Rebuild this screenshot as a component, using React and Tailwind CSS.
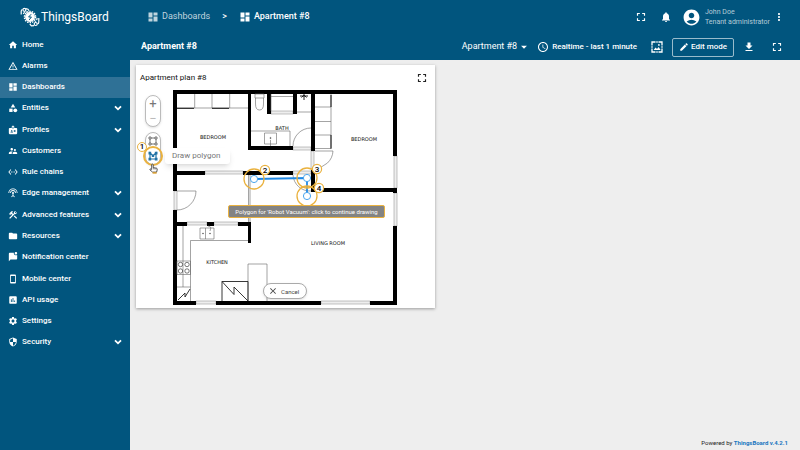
import React from 'react';
import {
  MdAccountCircle, MdArrowDropDown, MdBadge, MdCategory, MdConstruction, MdDashboard, MdEdit, MdFileDownload,
  MdFolder, MdFullscreen, MdHome, MdInsertChart, MdMarkChatUnread, MdMoreVert, MdNotifications, MdAccessTime,
  MdSecurity, MdSettings, MdSettingsEthernet, MdSettingsInputAntenna, MdSmartphone, MdSupervisorAccount,
  MdWarningAmber, MdClose,
} from 'react-icons/md';

const menu = [
  { label: 'Home', icon: MdHome },
  { label: 'Alarms', icon: MdWarningAmber },
  { label: 'Dashboards', icon: MdDashboard, active: true },
  { label: 'Entities', icon: MdCategory, expandable: true },
  { label: 'Profiles', icon: MdBadge, expandable: true },
  { label: 'Customers', icon: MdSupervisorAccount },
  { label: 'Rule chains', icon: MdSettingsEthernet },
  { label: 'Edge management', icon: MdSettingsInputAntenna, expandable: true },
  { label: 'Advanced features', icon: MdConstruction, expandable: true },
  { label: 'Resources', icon: MdFolder, expandable: true },
  { label: 'Notification center', icon: MdMarkChatUnread },
  { label: 'Mobile center', icon: MdSmartphone },
  { label: 'API usage', icon: MdInsertChart },
  { label: 'Settings', icon: MdSettings },
  { label: 'Security', icon: MdSecurity, expandable: true },
];

const Chevron = () => (
  <svg viewBox="0 0 8 8" className="w-2 h-2" fill="none" stroke="currentColor" strokeWidth="1.8">
    <path d="M1 2.3 4 5.3 7 2.3" />
  </svg>
);

const Logo = () => (
  <svg viewBox="0 0 20 20" className="w-5 h-5" fill="none" stroke="currentColor" strokeWidth="1.2">
    <circle cx="10" cy="10" r="5.6" strokeWidth="1.4" strokeDasharray="1.5 1" />
    <circle cx="10" cy="10" r="4.3" fill="currentColor" />
    <path d="M11.2 7.2 8.6 10h2.8l-2.2 2.9" stroke="#01557e" strokeWidth="1" />
    <path d="M1.2 7.5V4.2Q1.2 2.7 2.4 2.5M4.6 5.2 3.2 7M5.8 1.7 8 2.2l1 1.6M6 4.6l1 1" />
    <circle cx="4.4" cy="2.8" r="1.5" />
    <path d="M18.8 11v4.2q0 1.4-1.3 1.8M15 14.4l1 .8M14 18.6l-2.6.2-1.6-1.8M17.2 11.2l-.6 2" />
    <circle cx="15.7" cy="17" r="1.5" />
  </svg>
);

const Sidebar = () => (
  <aside className="w-[130px] shrink-0 bg-[#01557e] text-white">
    <a href="#home" className="flex items-center h-[34px] pl-5 gap-[1px]">
      <Logo />
      <span className="text-[12px] leading-4">ThingsBoard</span>
    </a>
    <nav className="grid auto-rows-fr h-[319px]">
      {menu.map(({ label, icon: Icon, active, expandable }) => (
        <a
          key={label}
          href="#menu"
          className={`flex items-center pl-2 pr-2 text-[8px] leading-none font-medium ${active ? 'bg-[#2f7196]' : ''}`}
        >
          <Icon className="w-[10px] h-[10px] mr-1" />
          <span className="flex-1 whitespace-nowrap">{label}</span>
          {expandable && <Chevron />}
        </a>
      ))}
    </nav>
  </aside>
);

const TopBar = () => (
  <header className="flex items-center h-[34px] pl-[17px] pr-[15px] bg-[#01557e] text-white">
    <a href="#dashboards" className="flex items-center gap-[3px] text-[9px] text-white/75">
      <MdDashboard className="w-3 h-3" />
      Dashboards
    </a>
    <span className="mx-3 text-[9px] font-medium">&gt;</span>
    <a href="#apartment" className="flex items-center gap-[3px] text-[9px] font-medium">
      <MdDashboard className="w-3 h-3" />
      Apartment #8
    </a>
    <div className="flex items-center ml-auto">
      <button aria-label="Fullscreen"><MdFullscreen className="w-[14px] h-[14px]" /></button>
      <button aria-label="Notifications" className="ml-3"><MdNotifications className="w-3 h-3" /></button>
      <button aria-label="Account" className="ml-[10px]"><MdAccountCircle className="w-[19px] h-[19px]" /></button>
      <div className="w-[62px] ml-1 text-[7px] leading-[10px] text-white/70 whitespace-nowrap">
        <p>John Doe</p>
        <p>Tenant administrator</p>
      </div>
      <button aria-label="More" className="ml-[6px]"><MdMoreVert className="w-3 h-3" /></button>
    </div>
  </header>
);

const ImageFrame = () => (
  <svg viewBox="0 0 12 12" className="w-3 h-3" fill="none" stroke="currentColor" strokeWidth="1.3">
    <path d="M4.5 1H1v3.5M7.5 1H11v3.5M4.5 11H1V7.5M7.5 11H11V7.5M1 5.3v1.4M11 5.3v1.4M5.3 1h1.4M5.3 11h1.4" />
    <path d="M2.6 9 4.6 6.6 6 8l1.6-2L9.6 9Z" fill="currentColor" stroke="none" />
    <circle cx="7.9" cy="3.9" r=".9" fill="currentColor" stroke="none" />
  </svg>
);

const DashboardToolbar = () => (
  <div className="flex items-center h-[26px] pl-[11px] pr-4 bg-[#01557e] text-white">
    <h1 className="text-[9px] font-bold">Apartment #8</h1>
    <div className="flex items-center ml-auto text-[9px]">
      <button className="flex items-center">
        Apartment #8
        <MdArrowDropDown className="w-[14px] h-[14px]" />
      </button>
      <button className="flex items-center gap-[3px] ml-[6px] text-[8px] font-medium">
        <MdAccessTime className="w-3 h-3" />
        Realtime - last 1 minute
      </button>
      <button aria-label="Image" className="ml-[14px]"><ImageFrame /></button>
      <button className="flex items-center justify-center gap-[2px] w-[62px] h-[19px] ml-[9px] border border-white/60 rounded-[2px] text-[8px] font-medium">
        <MdEdit className="w-[10px] h-[10px]" />
        Edit mode
      </button>
      <button aria-label="Download" className="ml-[9px]"><MdFileDownload className="w-3 h-3" /></button>
      <button aria-label="Expand" className="ml-[15px]"><MdFullscreen className="w-[14px] h-[14px]" /></button>
    </div>
  </div>
);

// x, y, width, height
const walls = [
  [0, 0, 224, 4], [0, 0, 4, 101], [0, 120, 4, 95], [0, 211, 23, 4], [43, 211, 105, 4], [197, 211, 27, 4],
  [220, 0, 4, 66], [220, 98, 4, 5], [220, 136, 4, 79], [75, 0, 3, 60], [75, 56, 45, 4], [138, 0, 4, 61],
  [94, 0, 4, 24], [120, 0, 4, 24], [0, 81, 32, 4], [70, 81, 50, 4], [138, 80, 4, 22], [138, 98, 86, 4],
  [0, 132, 14, 4], [34, 132, 7, 4], [65, 132, 13, 4], [75, 132, 3, 21],
];

const windows = [
  [32, 81, 38, 3], [14, 132, 20, 3], [41, 132, 24, 3], [23, 211, 20, 3], [148, 211, 49, 3],
  [221, 66, 3, 32], [221, 103, 3, 33], [98, 21, 22, 3], [1, 101, 3, 19], [120, 57, 18, 3], [138, 61, 3, 19],
  [120, 81, 18, 3],
];

const rooms = [
  ['BEDROOM', 40, 49], ['BATH', 109, 40], ['BEDROOM', 191, 51], ['LIVING ROOM', 155, 155], ['KITCHEN', 44, 174],
];

const steps = [
  { n: 2, x: 81, y: 89, bx: 92, by: 80 },
  { n: 3, x: 134, y: 88, bx: 144, by: 79 },
  { n: 4, x: 134, y: 106, bx: 146, by: 98 },
];

const FloorPlan = () => (
  <svg viewBox="0 0 224 215" className="w-full h-auto overflow-visible">
    <g fill="#eee" stroke="#888" strokeWidth=".5">
      {windows.map(([x, y, w, h], i) => <rect key={i} x={x} y={y} width={w} height={h} />)}
    </g>
    <g>
      {walls.map(([x, y, w, h], i) => <rect key={i} x={x} y={y} width={w} height={h} />)}
    </g>
    <g fill="none" stroke="#666" strokeWidth=".6">
      {/* closets */}
      <path d="M4 18H75M21.7 4V18M39 4V18M56.7 4V18M142 17H158M142 31.5H158M142 45H158M142 58.5H158M158 4V59" />
      <path d="M4 18.3H21M39 18.3H56M158 5V17M158 45V58.5" stroke="#111" strokeWidth="1" />
      {/* bathroom */}
      <path d="M82 4H91V8H82ZM82.5 8V14Q82.5 20 86.5 20T90.5 14V8M98 4V21M124 22H138M78 41H117V56M91.5 43H103.5V54H91.5Z" />
      <path d="M98 6.5H120M97.5 50V56" />
      <path d="M131 4V10M127 6H135M128.5 7.5 131 5 133.5 7.5" stroke="#222" strokeWidth="1" />
      <circle cx="97.5" cy="48" r=".6" fill="#333" />
      {/* doors */}
      <path d="M120 56A18 18 0 0 1 138 38M142 61H160A18 18 0 0 1 142 78M120 85A17 17 0 0 0 138 101M4 101H23A19 19 0 0 1 4 120" />
      {/* hall and kitchen */}
      <path d="M75.5 85V132M77 85V132M10 136V197M17.5 211V150.5H75M75 211V174H94V211" />
      <path d="M27 138H41V149H27ZM32.5 138V149M35 136Q39 136 37 141" />
      <path d="M4 171H17.5V184.5H4ZM4 197H17.5" />
      <path d="M49 191.5H75V211M49 191.5V211M49 191.5 61 204.5V197L75 211M5 210 12 203V207L17 199" stroke="#222" strokeWidth=".9" />
      {[[7.5, 174.5], [14, 174.5], [7.5, 181], [14, 181]].map(([x, y]) => (
        <circle key={`${x}-${y}`} cx={x} cy={y} r="2.2" stroke="#222" />
      ))}
      <circle cx="30" cy="143.5" r=".5" fill="#333" />
      <circle cx="37" cy="143.5" r=".5" fill="#333" />
    </g>
    <g fontFamily="DejaVu Sans, sans-serif" fontSize="5" textAnchor="middle" fill="#111">
      {rooms.map(([name, x, y], i) => <text key={i} x={x} y={y}>{name}</text>)}
    </g>

    <path d="M81 89 134 88V106" fill="none" stroke="#1e88e5" strokeWidth="1.8" />
    {steps.map(({ n, x, y, bx, by }) => (
      <g key={n}>
        <circle cx={x} cy={y} r="3.6" fill="#fff" stroke="#4ba6ee" strokeWidth="1" />
        <circle cx={x} cy={y} r="10" fill="none" stroke="#eab23f" strokeWidth="1.3" />
        <circle cx={bx} cy={by} r="4.6" fill="#fff" stroke="#eab23f" strokeWidth="1.2" />
        <text x={bx} y={by + 3} textAnchor="middle" fontSize="8" fontWeight="500">{n}</text>
      </g>
    ))}
  </svg>
);

const RectangleIcon = () => (
  <svg viewBox="0 0 10 10" className="w-[10px] h-[10px]" fill="#fff" stroke="#666" strokeWidth=".9">
    <path d="M2 2H8V8H2Z" />
    <path d="M1 1H3V3H1ZM7 1H9V3H7ZM1 7H3V9H1ZM7 7H9V9H7Z" />
  </svg>
);

const PolygonIcon = () => (
  <svg viewBox="0 0 10 10" className="w-[10px] h-[10px]" fill="none" stroke="#2272a5" strokeWidth="1.2">
    <path d="M2 2 5 4.8 8 2V8H2Z" />
    <path d="M.5.8H3.2V3.4H.5ZM6.8.8H9.5V3.4H6.8ZM.5 6.8H3.2V9.4H.5ZM6.8 6.8H9.5V9.4H6.8ZM3.8 3.7H6.2V6H3.8Z" fill="#2272a5" stroke="none" />
  </svg>
);

const Pointer = () => (
  <svg viewBox="0 0 10 12" className="w-[9px] h-[11px]" fill="#fff" stroke="#333" strokeWidth=".9">
    <path d="M3 7V2Q3 1 3.8 1T4.7 2V5L8.5 5.7Q9.3 6 9.2 7L8.5 10H4L1 7.5Q.8 6.3 1.8 6.5Z" />
    <path d="M5 5V7M6.5 5.5V7.2M7.9 5.8V7.4" strokeWidth=".5" />
    <path d="M4 10.9H8.5" stroke="#d9981f" strokeWidth="1.6" />
  </svg>
);

const MapControls = () => (
  <div className="relative w-4 ml-[9px] mr-3 pt-[5px] text-[#777]">
    <div className="flex flex-col h-8 rounded-full border border-[#bbb] bg-white shadow text-[13px] leading-4">
      <button aria-label="Zoom in" className="flex-1 leading-none">+</button>
      <button aria-label="Zoom out" className="flex-1 leading-none text-[#bbb]">−</button>
    </div>
    <div className="flex flex-col items-center justify-around h-[33px] mt-[5px] rounded-full border border-[#bbb] bg-white shadow">
      <button aria-label="Draw rectangle"><RectangleIcon /></button>
      <button aria-label="Draw polygon"><PolygonIcon /></button>
    </div>
    <div className="absolute -left-[2px] top-[56px] w-5 h-5 rounded-full border-2 border-[#eab23f]" />
    <div className="absolute -left-2 top-[52px] flex items-center justify-center w-[10px] h-[10px] rounded-full border border-[#eab23f] bg-white text-[8px] font-medium text-black">1</div>
    <div className="absolute left-1 top-[73px]"><Pointer /></div>
    <div className="absolute left-5 top-[58px] z-10 px-[7px] w-[65px] h-4 rounded-[3px] bg-white shadow-md text-[8px] leading-4 text-[#777] whitespace-nowrap">
      Draw polygon
    </div>
  </div>
);

const PlanWidget = () => (
  <section className="w-[299px] h-[243px] bg-white shadow-[0_1px_3px_rgba(0,0,0,0.35)]">
    <div className="flex items-center justify-between h-[25px] pl-1 pr-[6px]">
      <h2 className="text-[8px] text-[#111]">Apartment plan #8</h2>
      <button aria-label="Expand widget"><MdFullscreen className="w-[14px] h-[14px] text-[#222]" /></button>
    </div>
    <div className="flex">
      <MapControls />
      <div className="relative w-[224px]">
        <FloorPlan />
        <div className="absolute left-[55px] top-[115px] w-[157px] h-[13px] rounded-[2px] border border-[#eab23f] bg-[#838383] text-center text-[6px] leading-[11px] text-white whitespace-nowrap">
          Polygon for 'Robot Vacuum': click to continue drawing
        </div>
        <button className="absolute left-[90px] top-[193px] flex items-center gap-[3px] w-[44px] h-4 pl-1 rounded-full border border-[#aaa] bg-white shadow text-[6px] text-[#444]">
          <MdClose className="w-[10px] h-[10px]" />
          Cancel
        </button>
      </div>
    </div>
  </section>
);

export default function App() {
  return (
    <div className="flex min-h-screen bg-[#eee] font-[Roboto,sans-serif]">
      <Sidebar />
      <div className="flex flex-col flex-1 min-w-0">
        <TopBar />
        <DashboardToolbar />
        <main className="flex-1 pt-[5px] pl-[6px]">
          <PlanWidget />
        </main>
        <footer className="pr-3 pb-[2px] text-right text-[6px] leading-[10px] text-[#222]">
          Powered by <a href="#thingsboard" className="font-bold text-[#1976c0]">ThingsBoard v.4.2.1</a>
        </footer>
      </div>
    </div>
  );
}
